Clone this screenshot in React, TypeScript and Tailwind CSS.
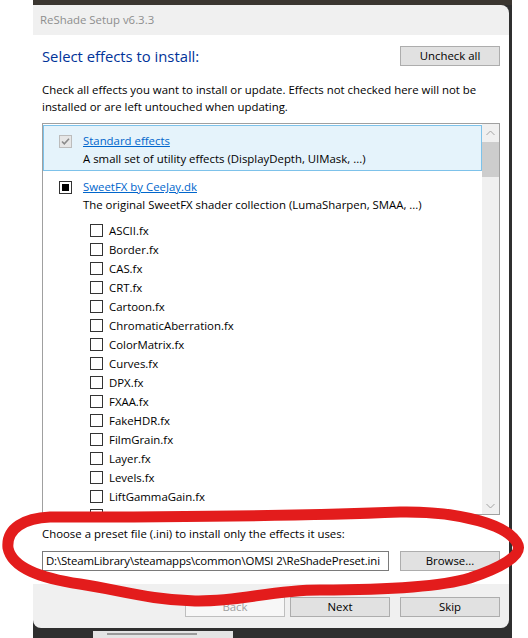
import React from "react";

const subs = [
  "ASCII.fx",
  "Border.fx",
  "CAS.fx",
  "CRT.fx",
  "Cartoon.fx",
  "ChromaticAberration.fx",
  "ColorMatrix.fx",
  "Curves.fx",
  "DPX.fx",
  "FXAA.fx",
  "FakeHDR.fx",
  "FilmGrain.fx",
  "Layer.fx",
  "Levels.fx",
  "LiftGammaGain.fx",
  "LumaSharpen.fx",
];

function Btn({ label, disabled = false }: { label: string; disabled?: boolean }) {
  return (
    <div
      className={
        disabled
          ? "h-[20px] w-[100px] shrink-0 flex items-center justify-center border border-[#bfbfbf] bg-[#f7f7f7] text-[#a0a0a0]"
          : "h-[20px] w-[100px] shrink-0 flex items-center justify-center border border-[#adadad] bg-[#e1e1e1] text-black"
      }
    >
      {label}
    </div>
  );
}

function Box() {
  return <div className="w-[13px] h-[13px] shrink-0 border border-[#333333] bg-white" />;
}

function DisabledCheck() {
  return (
    <div className="w-[13px] h-[13px] shrink-0 border border-[#bcbcbc] bg-[#e6e6e6] flex items-center justify-center">
      <svg width="11" height="11" viewBox="0 0 11 11">
        <path d="M2 5.5 L4.3 7.8 L9 2.8" fill="none" stroke="#8a8a8a" strokeWidth="1.6" />
      </svg>
    </div>
  );
}

function Indeterminate() {
  return (
    <div className="w-[13px] h-[13px] shrink-0 border border-[#333333] bg-white flex items-center justify-center">
      <div className="w-[7px] h-[7px] bg-black" />
    </div>
  );
}

export default function App() {
  return (
    <div className="relative w-[528px] h-[638px] overflow-hidden bg-white font-['Open_Sans',sans-serif] text-[11.4px] leading-[18px] text-black">
      <div className="ml-[33px] w-[479px] h-full bg-[#2f2f2f] flex flex-col">
        <div className="h-[5px] shrink-0 bg-[#3b3630]" />
        <div className="w-[476px] h-[623px] shrink-0 flex flex-col overflow-hidden rounded-tr-[8px] rounded-b-[8px]">
          {/* title bar */}
          <div className="h-[30px] shrink-0 bg-[#f0f0f0] pl-[7px] flex items-center text-[#8e8e8e] text-[11.4px]">
            ReShade Setup v6.3.3
          </div>
          {/* content */}
          <div className="flex-1 bg-white pl-[9px] pr-[9px] flex flex-col">
            <div className="mt-[11px] h-[20px] flex items-center justify-between">
              <div className="text-[14.8px] leading-[20px] text-[#003399]">Select effects to install:</div>
              <Btn label="Uncheck all" />
            </div>
            <div className="mt-[15px] leading-[17px] whitespace-nowrap">
              Check all effects you want to install or update. Effects not checked here will not be
              <br />
              installed or are left untouched when updating.
            </div>
            <div className="mt-[8px] h-[392px] border border-[#a0a0a0] flex">
              <div className="flex-1 overflow-hidden pt-[1px]">
                <div className="h-[46px] border border-[#7dc2ea] bg-[#e5f3fb] pl-[15px] pt-[6px] flex">
                  <div className="h-[18px] flex items-center">
                    <DisabledCheck />
                  </div>
                  <div className="ml-[11px] whitespace-nowrap">
                    <div className="text-[#0066cc] underline">Standard effects</div>
                    <div>A small set of utility effects (DisplayDepth, UIMask, ...)</div>
                  </div>
                </div>
                <div className="pl-[16px] pt-[7px] pb-[7px] flex">
                  <div className="h-[18px] flex items-center">
                    <Indeterminate />
                  </div>
                  <div className="ml-[11px] whitespace-nowrap">
                    <div className="text-[#0066cc] underline">SweetFX by CeeJay.dk</div>
                    <div>The original SweetFX shader collection (LumaSharpen, SMAA, ...)</div>
                  </div>
                </div>
                {subs.map((s) => (
                  <div key={s} className="h-[19px] pl-[47px] flex items-center whitespace-nowrap">
                    <Box />
                    <span className="ml-[6px]">{s}</span>
                  </div>
                ))}
              </div>
              <div className="w-[17px] shrink-0 bg-[#f0f0f0] flex flex-col">
                <div className="h-[17px] flex items-center justify-center">
                  <svg width="9" height="6" viewBox="0 0 9 6">
                    <path d="M0.5 5 L4.5 1 L8.5 5" fill="none" stroke="#a3a3a3" strokeWidth="1" />
                  </svg>
                </div>
                <div className="mt-[1px] h-[35px] bg-[#cdcdcd]" />
                <div className="flex-1" />
                <div className="h-[17px] flex items-center justify-center">
                  <svg width="9" height="6" viewBox="0 0 9 6">
                    <path d="M0.5 1 L4.5 5 L8.5 1" fill="none" stroke="#a3a3a3" strokeWidth="1" />
                  </svg>
                </div>
              </div>
            </div>
            <div className="mt-[10px] whitespace-nowrap">
              Choose a preset file (.ini) to install only the effects it uses:
            </div>
            <div className="mt-[8px] h-[20px] flex items-center">
              <div className="w-[347px] h-[20px] border border-[#7a7a7a] bg-white px-[3px] flex items-center whitespace-nowrap overflow-hidden tracking-[-0.15px]">
                D:\SteamLibrary\steamapps\common\OMSI 2\ReShadePreset.ini
              </div>
              <div className="ml-auto">
                <Btn label="Browse..." />
              </div>
            </div>
          </div>
          {/* bottom bar */}
          <div className="h-[44px] shrink-0 bg-[#f0f0f0] pt-[13px] pr-[9px] flex justify-end items-start">
            <Btn label="Back" disabled />
            <div className="ml-[5px]">
              <Btn label="Next" />
            </div>
            <div className="ml-[10px]">
              <Btn label="Skip" />
            </div>
          </div>
        </div>
        <div className="flex-1 pt-[3px] pl-[60px]">
          <div className="w-[140px] h-full bg-[#e4e4e4] pt-[2px] pl-[14px]">
            <div className="w-[90px] h-[2px] bg-[#9a9a9a]" />
          </div>
        </div>
      </div>
      <svg className="absolute inset-0 pointer-events-none" width="528" height="638" viewBox="0 0 528 638">
        <path
          d="M 8 548 C 6 528, 25 518, 50 517 C 150 517, 300 516, 400 512 C 460 511, 510 525, 518 545 C 522 556, 500 568, 470 578 C 440 587, 380 590, 320 590 C 270 590, 240 602, 195 601 C 150 600, 120 590, 80 584 C 40 578, 12 568, 8 548 Z"
          fill="none"
          stroke="#e31c1c"
          strokeWidth="11"
          strokeLinecap="round"
          strokeLinejoin="round"
        />
      </svg>
    </div>
  );
}
